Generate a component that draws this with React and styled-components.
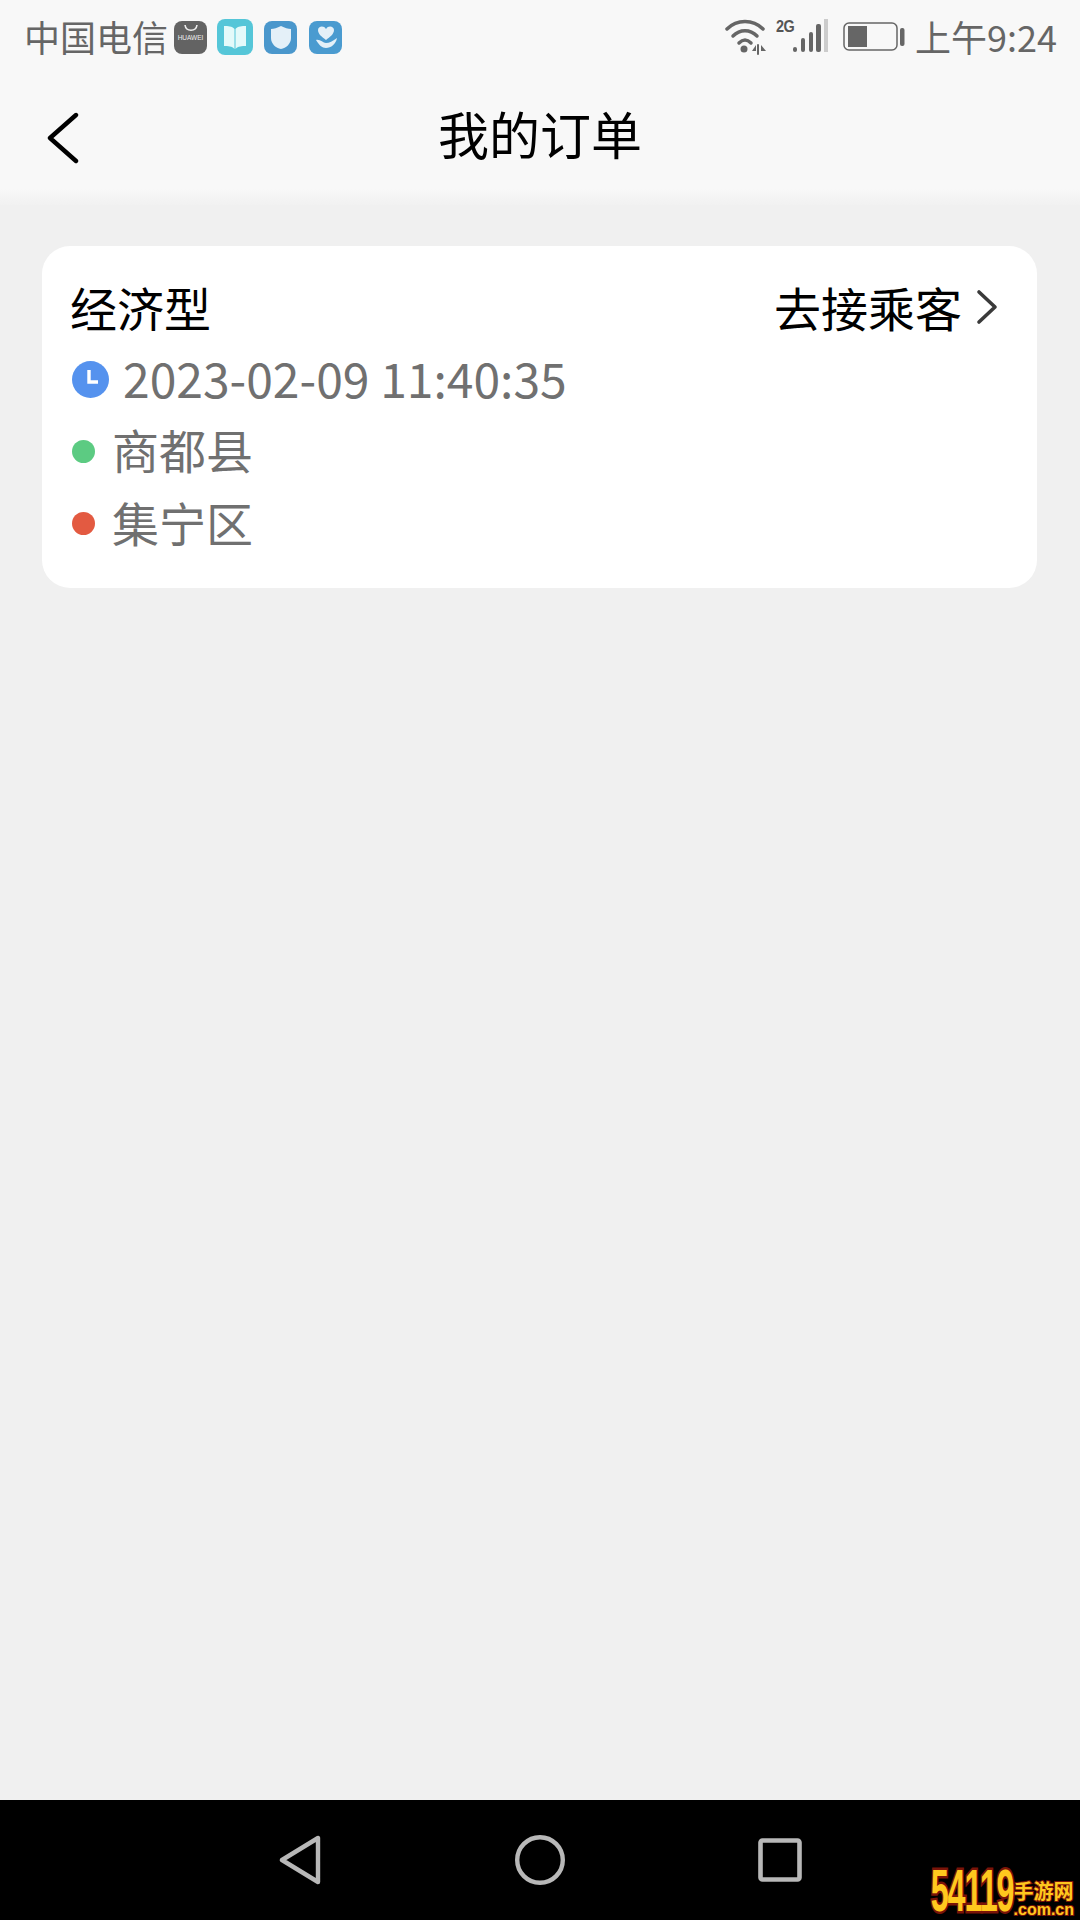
import styled, { createGlobalStyle } from 'styled-components'

const GlobalStyle = createGlobalStyle`
  html, body {
    margin: 0;
    padding: 0;
    background: #f0f0f0;
  }
  * {
    box-sizing: border-box;
  }
`;

const cjk = `"Noto Sans CJK SC", "Noto Sans", sans-serif`;

const Page = styled.div`
  position: relative;
  width: 1080px;
  height: 1920px;
  display: flex;
  flex-direction: column;
  background: #f0f0f0;
  font-family: ${cjk};
  overflow: hidden;
`;

const Header = styled.header`
  height: 205px;
  flex-shrink: 0;
  background: linear-gradient(#f8f8f8 92%, #f1f1f1 100%);
`;

const StatusBar = styled.div`
  height: 74px;
  padding: 0 23px 0 24px;
  display: flex;
  align-items: center;
  justify-content: space-between;
  color: #666;
  font-size: 36px;
`;

const StatusGroup = styled.div`
  display: flex;
  align-items: center;
`;

const StatusText = styled.span`
  line-height: 74px;
  white-space: nowrap;
  transform: translateY(-1px);
`;

const AppIcon = styled.div`
  width: ${p => p.size || 33}px;
  height: ${p => p.size || 33}px;
  margin-left: ${p => p.gap}px;
  border-radius: 8px;
  background: ${p => p.bg};
  display: flex;
  align-items: center;
  justify-content: center;
  flex-shrink: 0;
`;

const HuaweiIcon = styled(AppIcon)`
  flex-direction: column;
  justify-content: flex-start;
  color: #eee;
  font-family: "Liberation Sans", sans-serif;
  font-size: 6.5px;
  line-height: 8px;

  svg {
    margin-top: 3px;
    margin-bottom: 2px;
  }
`;

const NavRow = styled.div`
  position: relative;
  height: 131px;
  display: flex;
  align-items: center;
  justify-content: center;
`;

const BackButton = styled.div`
  position: absolute;
  left: 46px;
  top: 38px;
  display: flex;
`;

const Title = styled.h1`
  margin: 0;
  font-size: 51px;
  font-weight: 400;
  color: #000;
  line-height: 1;
  transform: translateY(-6px);
`;

const Content = styled.main`
  flex: 1;
  padding: 41px 43px 0 42px;
`;

const Card = styled.section`
  background: #fff;
  border-radius: 28px;
  padding: 25px 39px 27px 28px;
  font-size: 47px;
  line-height: 72.5px;
  color: #707070;
`;

const CardHead = styled.div`
  display: flex;
  justify-content: space-between;
  align-items: center;
  color: #000;
`;

const Status = styled.div`
  display: flex;
  align-items: center;
  gap: 14px;
`;

const InfoRow = styled.div`
  display: flex;
  align-items: center;
`;

const IconSlot = styled.div`
  width: ${p => p.width}px;
  margin-left: 2px;
  display: flex;
  align-items: center;
`;

const Dot = styled.span`
  width: 23px;
  height: 23px;
  border-radius: 50%;
  background: ${p => p.color};
  transform: translateY(-1px);
`;

const RowText = styled.span`
  font-size: ${p => p.size || 47}px;
  transform: translateY(-3px);
`;

const BottomBar = styled.nav`
  height: 120px;
  flex-shrink: 0;
  background: #000;
  display: flex;
  justify-content: center;
  align-items: center;
`;

const NavSlot = styled.div`
  width: 240px;
  display: flex;
  justify-content: center;
`;

const Watermark = styled.div`
  position: absolute;
  right: 0;
  bottom: 2px;
  width: 150px;
  height: 52px;
  display: flex;
  align-items: flex-end;
  color: #ffc81e;
  font-weight: 700;
  font-family: "Liberation Sans", sans-serif;
`;

const WatermarkNum = styled.div`
  flex-shrink: 0;
  width: max-content;
  margin-left: -70px;
  margin-bottom: 4px;
  font-size: 60px;
  line-height: 46px;
  letter-spacing: -2px;
  white-space: nowrap;
  -webkit-text-stroke: 5px #7a1408;
  paint-order: stroke fill;
  transform: scaleX(0.54);
  transform-origin: right center;
`;

const WatermarkSide = styled.div`
  display: flex;
  flex-direction: column;
  align-items: flex-start;
  -webkit-text-stroke: 2px #7a1408;
  paint-order: stroke fill;
`;

const WatermarkCn = styled.div`
  font-family: ${cjk};
  font-size: 20px;
  line-height: 20px;
  margin-bottom: 1px;
  white-space: nowrap;
`;

const WatermarkDomain = styled.div`
  font-size: 16px;
  line-height: 16px;
  white-space: nowrap;
`;

function Wifi() {
  return (
    <svg width="42" height="36" viewBox="0 0 42 36" fill="none" stroke="#666" strokeLinecap="round">
      <path d="M2 10 C12 0 28 0 38 10" strokeWidth="3.5" />
      <path d="M8 17 C15 10 25 10 32 17" strokeWidth="3.5" />
      <path d="M14 24 C18 20 22 20 26 24" strokeWidth="3.5" />
      <circle cx="19" cy="30" r="3.5" fill="#666" stroke="none" />
      <path d="M31 26 L27 32 H31 Z" fill="#666" stroke="none" />
      <path d="M33 26 V35" strokeWidth="2" />
      <path d="M36 26 L41 32 H36 Z" fill="#666" stroke="none" />
    </svg>
  );
}

const SignalWrap = styled.div`
  position: relative;
  width: 53px;
  height: 54px;
  margin-left: 9px;
`;

const TwoG = styled.span`
  position: absolute;
  left: 0;
  top: 7px;
  font-family: "Liberation Sans", sans-serif;
  font-weight: 700;
  font-size: 17px;
  line-height: 20px;
  letter-spacing: -0.5px;
  color: #555;
  transform: scaleX(0.85);
  transform-origin: left;
`;

function Signal() {
  return (
    <SignalWrap>
      <TwoG>2G</TwoG>
      <svg width="53" height="54" viewBox="0 0 53 54">
        <rect x="17" y="37" width="4" height="5" rx="2" fill="#666" />
        <rect x="25" y="28" width="4" height="14" rx="2" fill="#666" />
        <rect x="33" y="22" width="4" height="20" rx="2" fill="#666" />
        <rect x="40" y="14" width="5" height="28" rx="2" fill="#666" />
        <rect x="48" y="9" width="4" height="33" fill="#ccc" />
      </svg>
    </SignalWrap>
  );
}

const BatteryWrap = styled.svg`
  margin-left: 14px;
  margin-right: 10px;
`;

function Battery() {
  return (
    <BatteryWrap width="62" height="32" viewBox="0 0 62 32">
      <rect x="1" y="2" width="53" height="27" rx="5" fill="none" stroke="#666" strokeWidth="1.5" />
      <rect x="5" y="5" width="19" height="21" fill="#666" />
      <rect x="57" y="7" width="4.5" height="18" rx="2" fill="#666" />
    </BatteryWrap>
  );
}

function Clock() {
  return (
    <svg width="37" height="37" viewBox="0 0 37 37">
      <circle cx="18.5" cy="18.5" r="18.5" fill="#5592ee" />
      <path d="M17 9 V21 H26" fill="none" stroke="#fff" strokeWidth="3.4" />
    </svg>
  );
}

export default function App() {
  return (
    <>
      <GlobalStyle />
      <Page>
        <Header>
          <StatusBar>
            <StatusGroup>
              <StatusText>中国电信</StatusText>
              <HuaweiIcon bg="#636363" gap={6}>
                <svg width="14" height="8" viewBox="0 0 14 8" fill="none" stroke="#eee" strokeWidth="1.6">
                  <path d="M1 1 C2 8 12 8 13 1" />
                </svg>
                HUAWEI
              </HuaweiIcon>
              <AppIcon bg="#55c6d8" size={36} gap={10}>
                <svg width="24" height="26" viewBox="0 0 24 26" fill="#e4fafa">
                  <path d="M1 2 C5 2 9 2 11.5 5 V25 C9 22 5 22 1 22 Z" />
                  <path d="M23 2 C19 2 15 2 12.5 5 V25 C15 22 19 22 23 22 Z" />
                </svg>
              </AppIcon>
              <AppIcon bg="#4a97cc" gap={11}>
                <svg width="22" height="25" viewBox="0 0 22 25" fill="#e4f0f8">
                  <path d="M11 1 C15 3 18 4 21 4 V13 C21 19 16 23 11 24 C6 23 1 19 1 13 V4 C4 4 7 3 11 1 Z" />
                </svg>
              </AppIcon>
              <AppIcon bg="#4a9bd0" gap={12}>
                <svg width="26" height="26" viewBox="0 0 26 26" fill="#e4f0f8">
                  <path d="M13 16 C9 13 5 10 5 6 C5 2 11 1 13 5 C15 1 21 2 21 6 C21 10 17 13 13 16 Z" />
                  <path d="M3 16 C7 15 10 19 13 19 C16 19 20 17 24 14 C23 20 18 24 13 24 C9 24 6 21 3 16 Z" />
                </svg>
              </AppIcon>
            </StatusGroup>
            <StatusGroup>
              <Wifi />
              <Signal />
              <Battery />
              <StatusText>上午9:24</StatusText>
            </StatusGroup>
          </StatusBar>
          <NavRow>
            <BackButton>
              <svg width="34" height="52" viewBox="0 0 34 52" fill="none" stroke="#000" strokeWidth="4.4" strokeLinecap="round" strokeLinejoin="round">
                <path d="M30 3 L4 26 L30 49" />
              </svg>
            </BackButton>
            <Title>我的订单</Title>
          </NavRow>
        </Header>
        <Content>
          <Card>
            <CardHead>
              <span>经济型</span>
              <Status>
                <span>去接乘客</span>
                <svg width="22" height="36" viewBox="0 0 22 36" fill="none" stroke="#3a3a3a" strokeWidth="3.6" strokeLinecap="round" strokeLinejoin="round">
                  <path d="M3 3 L19 18 L3 33" />
                </svg>
              </Status>
            </CardHead>
            <InfoRow>
              <IconSlot width={51}><Clock /></IconSlot>
              <RowText size={48}>2023-02-09 11:40:35</RowText>
            </InfoRow>
            <InfoRow>
              <IconSlot width={40}><Dot color="#5ccb82" /></IconSlot>
              <RowText>商都县</RowText>
            </InfoRow>
            <InfoRow>
              <IconSlot width={40}><Dot color="#e35a41" /></IconSlot>
              <RowText>集宁区</RowText>
            </InfoRow>
          </Card>
        </Content>
        <BottomBar>
          <NavSlot>
            <svg width="42" height="50" viewBox="0 0 42 50" fill="none" stroke="#b8b8b8" strokeWidth="4.4" strokeLinejoin="round">
              <path d="M39 3 V47 L3 25 Z" />
            </svg>
          </NavSlot>
          <NavSlot>
            <svg width="50" height="50" viewBox="0 0 50 50" fill="none" stroke="#b8b8b8" strokeWidth="4.4">
              <circle cx="25" cy="25" r="22.8" />
            </svg>
          </NavSlot>
          <NavSlot>
            <svg width="44" height="44" viewBox="0 0 44 44" fill="none" stroke="#b8b8b8" strokeWidth="4.6" strokeLinejoin="round">
              <rect x="2.5" y="2.5" width="39" height="39" rx="2" />
            </svg>
          </NavSlot>
        </BottomBar>
        <Watermark>
          <WatermarkNum>54119</WatermarkNum>
          <WatermarkSide>
            <WatermarkCn>手游网</WatermarkCn>
            <WatermarkDomain>.com.cn</WatermarkDomain>
          </WatermarkSide>
        </Watermark>
      </Page>
    </>
  );
}
